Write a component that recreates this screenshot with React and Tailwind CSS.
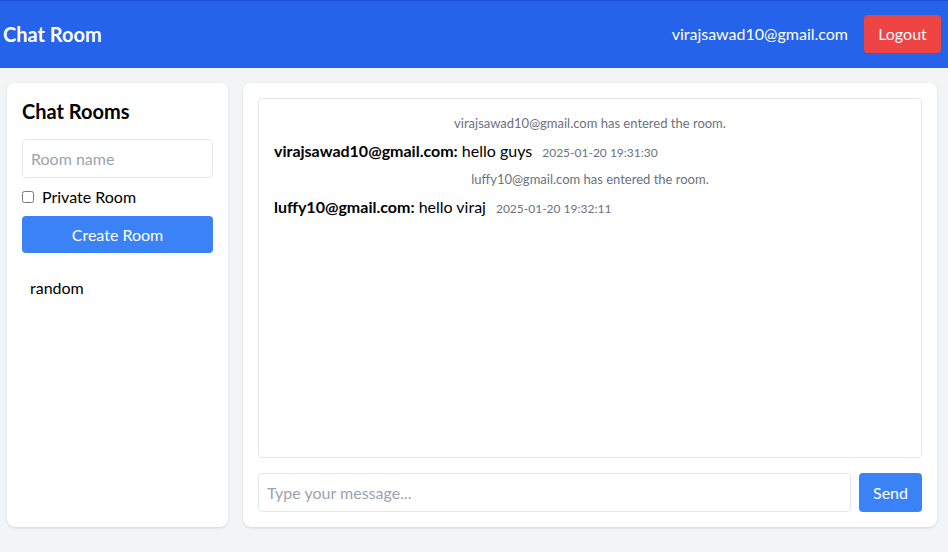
import React, { useState } from "react";

const messages = [
  { type: "system", text: "virajsawad10@gmail.com has entered the room." },
  { type: "chat", user: "virajsawad10@gmail.com", text: "hello guys", time: "2025-01-20 19:31:30" },
  { type: "system", text: "luffy10@gmail.com has entered the room." },
  { type: "chat", user: "luffy10@gmail.com", text: "hello viraj", time: "2025-01-20 19:32:11" },
];

function App() {
  const [roomName, setRoomName] = useState("");
  const [msg, setMsg] = useState("");

  return (
    <div className="h-[552px] bg-[#f3f4f6] font-['Lato',sans-serif] text-black overflow-hidden">
      <header className="bg-[#2563eb] border-t border-[#1d4ed8] h-[68px] flex items-center justify-between pl-[3px] pr-[7px] pb-[2px]">
        <h1 className="text-white text-xl font-bold">Chat Room</h1>
        <div className="flex items-center gap-4">
          <span className="text-white text-base">virajsawad10@gmail.com</span>
          <button className="bg-[#ef4444] text-white rounded h-[38px] w-[77px] text-base">Logout</button>
        </div>
      </header>

      <div className="flex gap-[15px] pl-[7px] pr-[11px] pt-[15px]">
        <aside className="w-[221px] h-[444px] bg-white rounded-lg shadow p-[15px]">
          <h2 className="text-xl font-bold leading-[26px] mb-[15px]">Chat Rooms</h2>
          <input
            value={roomName}
            onChange={(e) => setRoomName(e.target.value)}
            placeholder="Room name"
            className="w-full h-[39px] border border-[#e5e7eb] rounded px-2 text-base placeholder-[#9ca3af] outline-none"
          />
          <label className="flex items-center gap-2 mt-[8px] text-base leading-[22px]">
            <input type="checkbox" className="w-[12px] h-[12px]" />
            Private Room
          </label>
          <button className="w-full h-[37px] mt-[8px] bg-[#3b82f6] text-white rounded text-base">Create Room</button>
          <ul className="mt-[24px]">
            <li className="px-2 text-base leading-[22px]">random</li>
          </ul>
        </aside>

        <main className="flex-1 h-[444px] bg-white rounded-lg shadow p-[15px] flex flex-col gap-[15px]">
          <div className="h-[360px] border border-[#e5e7eb] rounded px-[15px] py-[14px] flex flex-col gap-[7px]">
            {messages.map((m, i) =>
              m.type === "system" ? (
                <p key={i} className="text-center text-[13px] text-[#6b7280] leading-[20px]">{m.text}</p>
              ) : (
                <p key={i} className="text-base leading-[22px]">
                  <strong className="font-bold">{m.user}:</strong> {m.text}
                  <span className="ml-[10px] text-xs text-[#6b7280]">{m.time}</span>
                </p>
              )
            )}
          </div>
          <div className="flex gap-2">
            <input
              value={msg}
              onChange={(e) => setMsg(e.target.value)}
              placeholder="Type your message..."
              className="flex-1 h-[39px] border border-[#e5e7eb] rounded px-2 text-base placeholder-[#9ca3af] outline-none"
            />
            <button className="w-[63px] h-[39px] bg-[#3b82f6] text-white rounded text-base">Send</button>
          </div>
        </main>
      </div>
    </div>
  );
}

export default App;
